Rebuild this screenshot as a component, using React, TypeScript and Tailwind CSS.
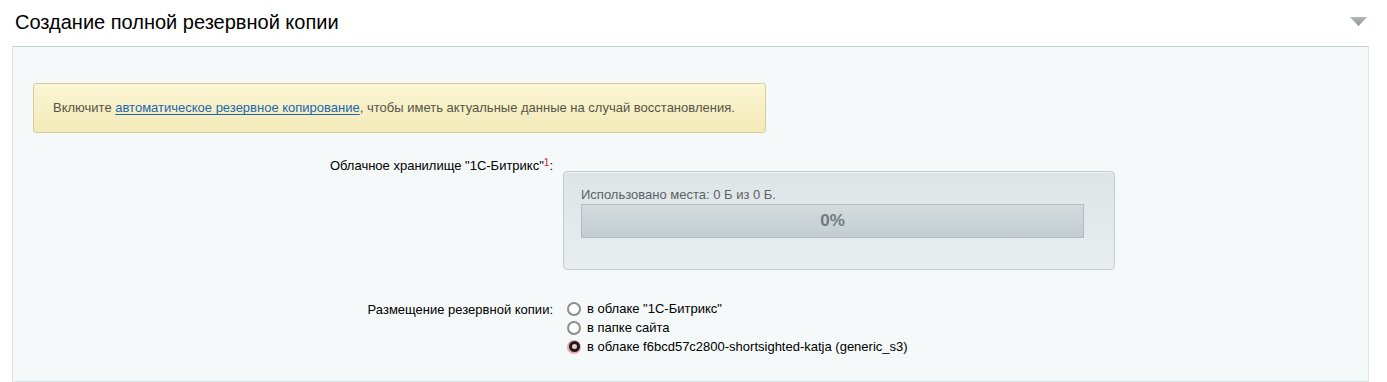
import React from "react";

const font = { fontFamily: '"Liberation Sans", Arial, sans-serif' };

function Radio({ checked, label }: { checked?: boolean; label: string }) {
  return (
    <label className="flex items-center h-[19px] text-[13px] text-[#000] leading-none">
      {checked ? (
        <span className="w-[14px] h-[14px] rounded-full bg-[#f0a2ad] flex items-center justify-center">
          <span className="w-[11px] h-[11px] rounded-full border-[3px] border-[#1d1d1d] bg-[#f5c6cd]" />
        </span>
      ) : (
        <span className="w-[14px] h-[14px] rounded-full border-2 border-[#8d8d8d] bg-white" />
      )}
      <span className="ml-[6px]">{label}</span>
    </label>
  );
}

export default function App() {
  return (
    <div className="w-[1387px] h-[382px] bg-white overflow-hidden" style={font}>
      <div className="flex items-center justify-between h-[46px] pl-[15px] pr-[20px]">
        <h2 className="text-[20px] text-[#000] leading-none -mt-[2px]">Создание полной резервной копии</h2>
        <svg width="17" height="9" viewBox="0 0 17 9" className="-mt-[3px]">
          <defs>
            <linearGradient id="ar" x1="0" y1="0" x2="0" y2="1">
              <stop offset="0" stopColor="#b4b8ba" />
              <stop offset="1" stopColor="#8a9094" />
            </linearGradient>
          </defs>
          <polygon points="0,0 17,0 8.5,9" fill="url(#ar)" />
        </svg>
      </div>

      <div className="ml-[12px] w-[1357px] h-[336px] bg-[#f5f9f9] border border-[#dde5e8] border-t-[#c9d1d5]">
        <div className="pt-[36px] pl-[20px]">
          <div className="w-[733px] h-[50px] rounded-[3px] border border-[#d8cc98] bg-[linear-gradient(#fbf6d4,#f3eab8)] flex items-center pl-[19px] text-[13px] text-[#555548]">
            Включите&nbsp;
            <a href="#" className="text-[#2067b0] underline underline-offset-2">автоматическое резервное копирование</a>
            , чтобы иметь актуальные данные на случай восстановления.
          </div>
        </div>

        <div className="grid grid-cols-[543px_1fr] mt-[25px] text-[13px]">
          <div className="text-right pr-[3px] text-[#000] leading-[15px]">
            Облачное хранилище "1С-Битрикс"<span className="text-[#e02020] text-[10px] relative -top-[4px]">1</span>:
          </div>
          <div />

          <div />
          <div className="pl-[7px] -mt-[3px]">
            <div className="w-[552px] h-[99px] rounded-[4px] border border-[#c4ccd0] bg-[linear-gradient(#dde5e7,#e8eef0)] shadow-[inset_0_1px_0_#eef3f4] pt-[15px] pl-[17px]">
              <div className="text-[#5b6165] leading-[16px]">Использовано места: 0 Б из 0 Б.</div>
              <div className="mt-[1px] w-[503px] h-[34px] border border-[#b3bcc0] bg-[linear-gradient(#d3dbdd,#c3cdd0)] flex items-center justify-center">
                <span className="text-[17px] font-bold text-[#6f7b81]">0%</span>
              </div>
            </div>
          </div>

          <div className="text-right pr-[3px] pt-[30px] text-[#000] leading-[19px]">Размещение резервной копии:</div>
          <div className="pl-[11px] pt-[29px] flex flex-col">
            <Radio label='в облаке "1С-Битрикс"' />
            <Radio label="в папке сайта" />
            <Radio checked label="в облаке f6bcd57c2800-shortsighted-katja (generic_s3)" />
          </div>
        </div>
      </div>
    </div>
  );
}
